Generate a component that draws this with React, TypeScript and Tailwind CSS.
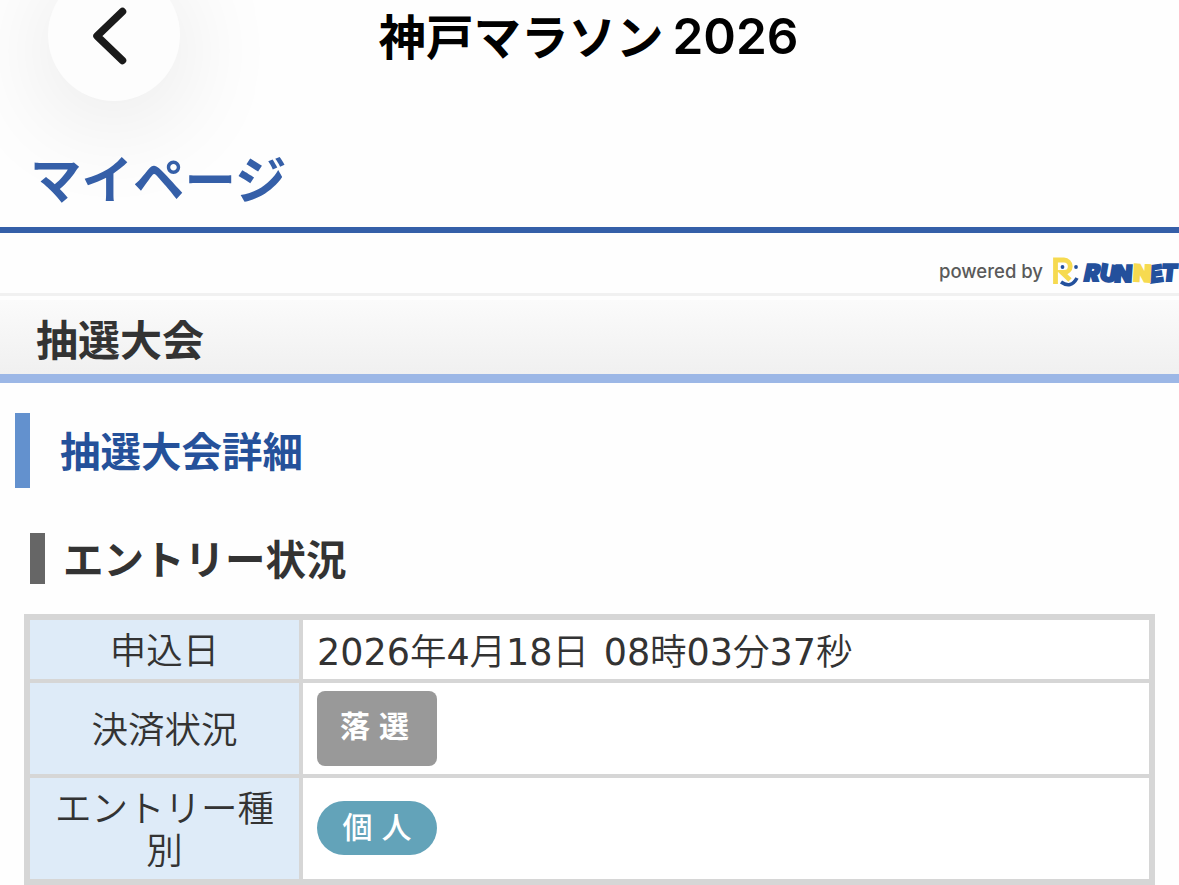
import type { ReactNode } from "react";

type EntryRow = {
  label: string;
  value: ReactNode;
};

type LogoLetter = {
  char: string;
  x: number;
  y: number;
  rotate: number;
  skew: number;
  color: string;
};

const NAVY = "#23509c";
const YELLOW = "#f6da50";

const LOGO_LETTERS: LogoLetter[] = [
  { char: "R", x: 31, y: 26, rotate: 0, skew: -12, color: NAVY },
  { char: "U", x: 47, y: 25, rotate: 10, skew: 0, color: NAVY },
  { char: "N", x: 62, y: 27, rotate: 0, skew: -4, color: NAVY },
  { char: "E", x: 98, y: 28, rotate: -8, skew: 0, color: NAVY },
  { char: "T", x: 109, y: 26, rotate: 0, skew: -6, color: NAVY },
  { char: "N", x: 81, y: 26, rotate: 3, skew: 0, color: YELLOW },
];

function RunnetLogo() {
  return (
    <svg viewBox="0 0 127 34" className="h-[34px] w-[127px] shrink-0">
      {/* smiling face mark */}
      <g fill="none" strokeLinecap="butt">
        <path
          d="M3.500 29V5h8.500a6 6 0 0 1 0 12.500H10l8 7.500"
          stroke={YELLOW}
          strokeWidth="4.800"
        />
        <path d="M9 27q10 7 16-4" stroke={NAVY} strokeWidth="3.600" />
      </g>
      <circle cx="10.500" cy="12" r="1.900" fill={NAVY} />
      <circle cx="24" cy="12" r="1.900" fill={NAVY} />
      {LOGO_LETTERS.map(({ char, x, y, rotate, skew, color }) => (
        <text
          key={x}
          transform={`translate(${x} ${y}) rotate(${rotate}) skewX(${skew})`}
          fill={color}
          stroke={color}
          strokeWidth="1.900"
          className="font-['Inter',sans-serif] text-[23px] font-black"
        >
          {char}
        </text>
      ))}
    </svg>
  );
}

function BackButton() {
  return (
    <button
      aria-label="戻る"
      className="absolute -top-[31px] left-12 flex size-[132px] items-center justify-center rounded-full bg-[#fdfdfd] shadow-[0_16px_110px_rgba(0,0,0,0.11)]"
    >
      <svg viewBox="0 0 40 60" className="mr-[11px] mt-[2px] h-[60px] w-10">
        <path
          d="M33.500 5.500L8 30L33.500 54.500"
          fill="none"
          stroke="#1a1a1a"
          strokeWidth="7.500"
          strokeLinecap="round"
          strokeLinejoin="round"
        />
      </svg>
    </button>
  );
}

const ROWS: EntryRow[] = [
  { label: "申込日", value: <span className="pt-[6px]">2026年4月18日 08時03分37秒</span> },
  {
    label: "決済状況",
    value: (
      <span className="flex h-[75px] w-[120px] justify-center gap-[9px] rounded-[8px] bg-[#999] pt-[12px] pr-[5px] font-['Noto_Sans_CJK_JP',sans-serif] text-[30px] leading-[42px] font-bold text-white">
        <span>落</span>
        <span>選</span>
      </span>
    ),
  },
  {
    label: "エントリー種別",
    value: (
      <span className="mb-[2px] flex h-[54px] w-[120px] items-center justify-center gap-[9px] rounded-full bg-[#63a3b9] pb-[6px] font-['Noto_Sans_CJK_JP',sans-serif] text-[30px] leading-none font-medium text-white">
        <span>個</span>
        <span>人</span>
      </span>
    ),
  },
];

export default function App() {
  return (
    <div className="h-[885px] w-full overflow-hidden bg-[#fefefe] font-['Noto_Sans_CJK_JP',sans-serif] text-[#333]">
      {/* App bar */}
      <header className="relative h-[227px]">
        <BackButton />
        <div className="relative flex h-[70px] items-center justify-center text-black">
          <h1 className="flex items-center gap-[9px] pr-[2px] text-[47.500px] leading-none font-bold whitespace-nowrap">
            <span>神戸マラソン</span>
            <span className="pt-[4px] font-['Inter',sans-serif] text-[49.500px] font-semibold">
              2026
            </span>
          </h1>
        </div>
        <p className="relative mt-[77px] ml-[30px] text-[51.500px] leading-[60px] font-bold text-[#355fa8]">
          マイページ
        </p>
      </header>

      <div className="h-[6px] bg-[#355fa8]" />

      <div className="flex h-[60px] items-center justify-end pt-[17px]">
        <span className="mr-[9px] font-['Inter',sans-serif] text-[18.500px] font-medium text-[#5a5a5a]">
          powered by
        </span>
        <RunnetLogo />
      </div>

      <div className="h-[3px] bg-[#f1f1f1]" />
      <h2 className="mt-1 flex h-[83px] items-center border-b-[9px] border-[#9cb7e6] bg-linear-to-b from-[#fbfbfb] to-[#f0f0f0] pl-9 pt-px text-[42px] leading-none font-bold">
        抽選大会
      </h2>

      <h3 className="mt-[30px] ml-[15px] flex h-[75px] items-center border-l-[15px] border-[#6391ce] pl-[30px] text-[40.500px] leading-none font-bold text-[#25519a]">
        抽選大会詳細
      </h3>

      <h4 className="mt-[45px] ml-[30px] flex h-[51px] items-center border-l-[15px] border-[#666] pl-[18px] text-[40.500px] leading-none font-bold">
        エントリー状況
      </h4>

      <dl className="mx-6 mt-[30px] grid h-[271px] grid-cols-[269px_1fr] grid-rows-[59px_91px_101px] gap-1 bg-[#d6d6d6] p-[6px] text-[36.500px] leading-[42px]">
        {ROWS.map(({ label, value }) => (
          <div key={label} className="contents">
            <dt className="flex items-center justify-center bg-[#deebf8] px-5 pb-[2px] text-center font-[350]">
              {label}
            </dt>
            <dd className="flex items-center bg-white pl-[14px] font-['DejaVu_Sans','Noto_Sans_CJK_JP_DemiLight','Noto_Sans_CJK_JP',sans-serif] [word-spacing:3px] whitespace-nowrap">
              {value}
            </dd>
          </div>
        ))}
      </dl>
    </div>
  );
}
